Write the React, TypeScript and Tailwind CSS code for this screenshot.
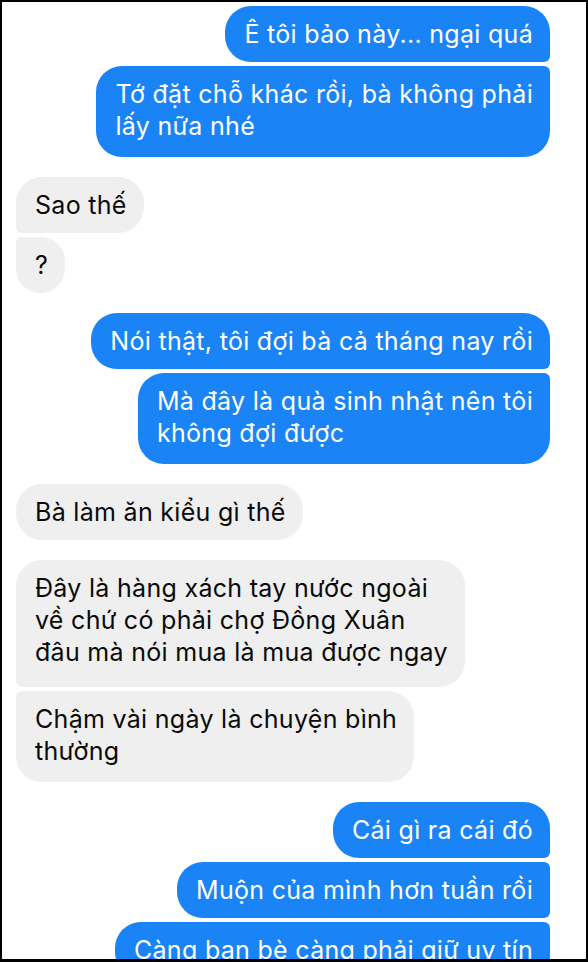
import React from "react";

type Pos = "single" | "first" | "middle" | "last";

const BIG = 26;
const SMALL = 6;

function radius(side: "out" | "in", pos: Pos): React.CSSProperties {
  const topSide = pos === "middle" || pos === "last" ? SMALL : BIG;
  const botSide = pos === "middle" || pos === "first" ? SMALL : BIG;
  if (side === "out") {
    return {
      borderTopLeftRadius: BIG,
      borderBottomLeftRadius: BIG,
      borderTopRightRadius: topSide,
      borderBottomRightRadius: botSide,
    };
  }
  return {
    borderTopRightRadius: BIG,
    borderBottomRightRadius: BIG,
    borderTopLeftRadius: topSide,
    borderBottomLeftRadius: botSide,
  };
}

function Bubble({
  side,
  pos,
  lines,
  pb,
}: {
  side: "out" | "in";
  pos: Pos;
  lines: string[];
  pb: number;
}) {
  const cls =
    side === "out"
      ? "self-end bg-[#1a84f6] text-white"
      : "self-start bg-[#efefef] text-[#0a0a0a]";
  return (
    <div
      className={`${cls} pl-[19px] pr-[17px] pt-[12px] text-[25px] tracking-[0.3px] leading-[32px] whitespace-nowrap`}
      style={{ ...radius(side, pos), paddingBottom: pb }}
    >
      {lines.map((l, i) => (
        <div key={i}>{l}</div>
      ))}
    </div>
  );
}

function Group({ children }: { children: React.ReactNode }) {
  return <div className="flex flex-col gap-[4px]">{children}</div>;
}

export default function App() {
  return (
    <div
      className="w-[588px] h-[962px] overflow-hidden bg-white border-2 border-b-[3px] border-black"
      style={{ fontFamily: "Inter, 'Noto Sans', 'Liberation Sans', sans-serif" }}
    >
      <div className="flex flex-col gap-[20px] pt-[4px] pl-[14px] pr-[36px]">
        <Group>
          <Bubble side="out" pos="first" pb={12} lines={["Ê tôi bảo này... ngại quá"]} />
          <Bubble side="out" pos="last" pb={15} lines={["Tớ đặt chỗ khác rồi, bà không phải", "lấy nữa nhé"]} />
        </Group>
        <Group>
          <Bubble side="in" pos="first" pb={12} lines={["Sao thế"]} />
          <Bubble side="in" pos="last" pb={12} lines={["?"]} />
        </Group>
        <Group>
          <Bubble side="out" pos="first" pb={12} lines={["Nói thật, tôi đợi bà cả tháng nay rồi"]} />
          <Bubble side="out" pos="last" pb={15} lines={["Mà đây là quà sinh nhật nên tôi", "không đợi được"]} />
        </Group>
        <Group>
          <Bubble side="in" pos="single" pb={12} lines={["Bà làm ăn kiểu gì thế"]} />
        </Group>
        <Group>
          <Bubble
            side="in"
            pos="first"
            pb={19}
            lines={["Đây là hàng xách tay nước ngoài", "về chứ có phải chợ Đồng Xuân", "đâu mà nói mua là mua được ngay"]}
          />
          <Bubble side="in" pos="last" pb={15} lines={["Chậm vài ngày là chuyện bình", "thường"]} />
        </Group>
        <Group>
          <Bubble side="out" pos="first" pb={12} lines={["Cái gì ra cái đó"]} />
          <Bubble side="out" pos="middle" pb={12} lines={["Muộn của mình hơn tuần rồi"]} />
          <Bubble side="out" pos="middle" pb={12} lines={["Càng bạn bè càng phải giữ uy tín"]} />
        </Group>
      </div>
    </div>
  );
}
